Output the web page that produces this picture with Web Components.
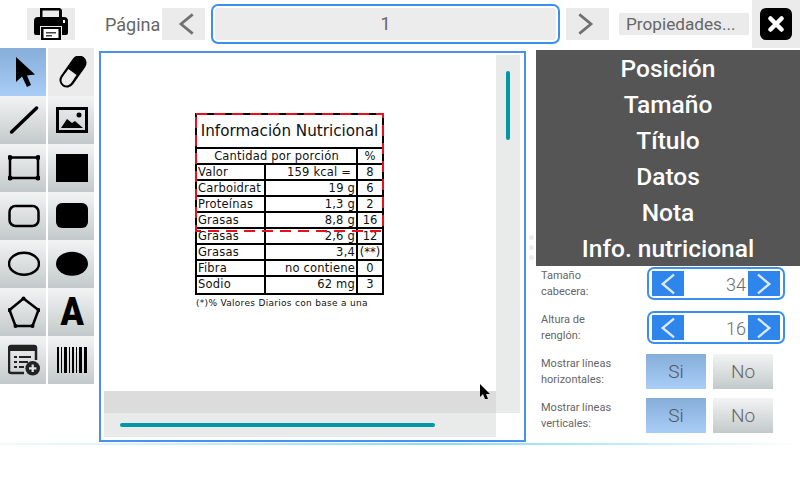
<!DOCTYPE html>
<html lang="es">
<head>
<meta charset="utf-8">
<title>Etiqueta</title>
<style>
  html, body { margin: 0; background: #fff; }
  body { width: 800px; height: 480px; overflow: hidden; font-family: Roboto, sans-serif; }
</style>
</head>
<body>
<app-shell>
  <app-topbar slot="top" page="1"></app-topbar>
  <tool-palette slot="tools"></tool-palette>
  <label-canvas slot="canvas"></label-canvas>
  <props-panel slot="props">
    <spin-field label="Tamaño cabecera:" value="34"></spin-field>
    <spin-field label="Altura de renglón:" value="16"></spin-field>
    <toggle-field label="Mostrar líneas horizontales:"></toggle-field>
    <toggle-field label="Mostrar líneas verticales:"></toggle-field>
  </props-panel>
</app-shell>

<script>
// Shared chevrons, used by the top bar and the spinners
const chevron = (dir, color, w, h, sw) => {
  const d = dir === "left" ? "M21 2 L4 16 L21 30" : "M3 2 L20 16 L3 30";
  return `<svg width="${w}" height="${h}" viewBox="0 0 24 32" fill="none" stroke="${color}" stroke-width="${sw}"><path d="${d}"/></svg>`;
};

/**
 * Page frame: top bar, then tools / canvas / properties, then the accent line.
 */
class AppShell extends HTMLElement {
  constructor() {
    super();
    this.attachShadow({ mode: "open" });
    this.shadowRoot.innerHTML = `
      <style>
        :host { display: block; width: 800px; height: 480px; }
        .main { display: flex; height: 395px; }
        .line {
          height: 2px;
          background: linear-gradient(90deg, #effbfe 0%, #dff6fc 12%, #8cdcf6 55%, #a8e6f9 70%, #ffffff 100%);
        }
      </style>
      <slot name="top"></slot>
      <div class="main">
        <slot name="tools"></slot>
        <slot name="canvas"></slot>
        <slot name="props"></slot>
      </div>
      <div class="line"></div>
    `;
  }
}

/**
 * Top bar with print button, page selector, properties and close.
 */
class AppTopbar extends HTMLElement {
  constructor() {
    super();
    this.attachShadow({ mode: "open" });
  }

  connectedCallback() {
    const page = this.getAttribute("page");
    this.shadowRoot.innerHTML = `
      <style>
        :host {
          display: flex;
          align-items: center;
          height: 48px;
          color: #666;
          font: 18px Roboto, sans-serif;
        }
        .btn {
          display: flex;
          align-items: center;
          justify-content: center;
          height: 32px;
          background: #ebebeb;
        }
        .print { width: 48px; margin-left: 27px; }
        .label { width: 57px; margin-left: 30px; white-space: nowrap; }
        .nav { width: 43px; box-sizing: border-box; }
        .prev { padding-left: 5px; }
        .next { padding-right: 5px; }
        .page {
          width: 341px;
          height: 32px;
          margin: 0 6px;
          padding: 2px;
          border: 2px solid #3a8ff0;
          border-radius: 7px;
          display: flex;
          align-items: center;
          justify-content: center;
          background: #fff;
          box-sizing: content-box;
        }
        .page span {
          flex: 1;
          height: 32px;
          line-height: 32px;
          text-align: center;
          background: #ebeceb;
          border-radius: 3px;
        }
        .props {
          margin-left: 10px;
          width: 130px;
          height: 22px;
          box-sizing: border-box;
          padding-left: 7px;
          line-height: 22px;
          font-size: 17.200px;
          background: #ebebeb;
          white-space: nowrap;
        }
        .close {
          width: 48px;
          height: 48px;
          margin-left: 3px;
          background: #ebebeb;
          display: flex;
          align-items: center;
          justify-content: center;
        }
        .close div {
          width: 32px;
          height: 32px;
          background: #000;
          border-radius: 6px;
          display: flex;
          align-items: center;
          justify-content: center;
        }
      </style>
      <div class="btn print">
        <svg width="34" height="32" viewBox="0 0 34 32">
          <path d="M6 0h20l2 2v8h-3V2.500H8.500V10H6z" fill="#000"/>
          <path d="M4 9h26a4 4 0 0 1 4 4v12a2 2 0 0 1-2 2h-4v-9H6v9H2a2 2 0 0 1-2-2V13a4 4 0 0 1 4-4z" fill="#000"/>
          <path d="M7 19h20v13H7z" fill="#000"/>
          <path d="M9.500 21h15v9h-15z" fill="#fff"/>
          <path d="M12 24h10v1.500H12zM12 27h6v1.500h-6z" fill="#444"/>
          <rect x="29" y="12" width="2" height="3" fill="#fff"/>
        </svg>
      </div>
      <span class="label">Página</span>
      <div class="btn nav prev">${chevron("left", "#707070", 17, 22, 4)}</div>
      <div class="page"><span>${page}</span></div>
      <div class="btn nav next">${chevron("right", "#707070", 17, 22, 4)}</div>
      <span class="props">Propiedades...</span>
      <div class="close">
        <div>
          <svg width="16" height="16" viewBox="0 0 16 16" stroke="#fff" stroke-width="4.500" stroke-linecap="round"><path d="M2.500 2.500 L13.500 13.500 M13.500 2.500 L2.500 13.500"/></svg>
        </div>
      </div>
    `;
  }
}

/**
 * One square button of the tool palette, the icon is slotted in.
 */
class ToolButton extends HTMLElement {
  constructor() {
    super();
    this.attachShadow({ mode: "open" });
    this.shadowRoot.innerHTML = `
      <style>
        :host {
          display: flex;
          align-items: center;
          justify-content: center;
          width: 46px;
          height: 48px;
          padding-left: 2px;
          box-sizing: border-box;
          background: linear-gradient(180deg, #f2f4f4 0%, #c3c9ca 100%);
        }
        :host([active]) { background: linear-gradient(180deg, #85aed9 0%, #a9cdf7 100%); }
        :host([flat]) { background: #ebebeb; }
      </style>
      <slot></slot>
    `;
  }
}

/**
 * Left palette, two columns of drawing tools.
 */
class ToolPalette extends HTMLElement {
  constructor() {
    super();
    this.attachShadow({ mode: "open" });
  }

  connectedCallback() {
    // icons drawn on a 32x32 box
    const svg = (body) => `<svg width="32" height="32" viewBox="0 0 32 32">${body}</svg>`;
    const icons = [
      ["active", svg(`<path d="M8 1 L8 26 L14 20.500 L19 31 L23 29 L19 19.500 L27 18.500 Z" fill="#000"/>`)],
      ["flat", svg(`<path d="M11 24 L23 7" stroke="#000" stroke-width="15" stroke-linecap="round"/><path d="M10.500 24.500 L13 21" stroke="#ebebeb" stroke-width="10" stroke-linecap="round"/><path d="M10.500 24.500 L16.500 16" stroke="#ebebeb" stroke-width="10"/>`)],
      ["", svg(`<path d="M3.600 28 L28.600 4" stroke="#000" stroke-width="3.500" stroke-linecap="round"/>`)],
      ["", svg(`<path d="M1.500 4.500h29v23h-29z" fill="none" stroke="#000" stroke-width="3"/><path d="M5 24 L11 15 L16 19 L19 17 L27 24 Z" fill="#000"/><circle cx="23" cy="11" r="2.500" fill="#000"/>`)],
      ["", svg(`<path d="M2 5.500h28v20.500H2z" fill="none" stroke="#000" stroke-width="2.500"/><g fill="#000"><circle cx="2" cy="5.500" r="2.500"/><circle cx="30" cy="5.500" r="2.500"/><circle cx="2" cy="26" r="2.500"/><circle cx="30" cy="26" r="2.500"/></g>`)],
      ["", svg(`<rect x="0" y="2" width="32" height="28" fill="#000"/>`)],
      ["", svg(`<rect x="1.500" y="6" width="29" height="20" rx="6" fill="none" stroke="#000" stroke-width="2.500"/>`)],
      ["", svg(`<rect x="0" y="3" width="32" height="25" rx="6" fill="#000"/>`)],
      ["", svg(`<ellipse cx="16" cy="15.700" rx="15" ry="11" fill="none" stroke="#000" stroke-width="2.500"/>`)],
      ["", svg(`<ellipse cx="16" cy="15.700" rx="16" ry="12" fill="#000"/>`)],
      ["", svg(`<path d="M15.500 2.500 L30.500 14 L24.500 30 L7.500 30 L1.500 14 Z" fill="none" stroke="#000" stroke-width="2.500" stroke-linejoin="round"/><g fill="#000"><circle cx="15.500" cy="2.500" r="2"/><circle cx="30.500" cy="14" r="2"/><circle cx="24.500" cy="30" r="2"/><circle cx="7.500" cy="30" r="2"/><circle cx="1.500" cy="14" r="2"/></g>`)],
      ["", `<span class="glyph">A</span>`],
      ["", svg(`<path d="M28 16V4a2 2 0 0 0-2-2H3a2 2 0 0 0-2 2v23a2 2 0 0 0 2 2h13" fill="none" stroke="#222" stroke-width="2.500"/><path d="M1 2h27v5H1z" fill="#222"/><path d="M6 12h3v2H6zM11 12h12v2H11zM6 17h3v2H6zM11 17h9v2h-9zM6 22h3v2H6zM11 22h5v2h-5z" fill="#222"/><circle cx="24.700" cy="24.300" r="7.300" fill="#222"/><path d="M21 24.300h7.400M24.700 20.600v7.400" stroke="#e0e3e3" stroke-width="2.200"/>`)],
      ["", svg(`<path d="M1 3h2v26H1zM5 3h1v26H5zM8 3h3v26H8zM13 3h1v26h-1zM16 3h2v26h-2zM20 3h1v26h-1zM23 3h3v26h-3zM28 3h3v26h-3z" fill="#000"/>`)],
    ];
    this.shadowRoot.innerHTML = `
      <style>
        :host {
          display: grid;
          grid-template-columns: 46px 46px;
          grid-auto-rows: 48px;
          column-gap: 2px;
          align-content: start;
          width: 94px;
        }
        svg { display: block; }
        .glyph {
          display: block;
          font: 900 39px/32px Roboto, sans-serif;
          color: #000;
          transform: scaleX(0.88);
        }
      </style>
      ${icons.map(([state, body]) => `<tool-button ${state}>${body}</tool-button>`).join("")}
    `;
  }
}

/**
 * Nutrition label, the table drawn on the canvas.
 */
class NutritionTable extends HTMLElement {
  constructor() {
    super();
    this.attachShadow({ mode: "open" });
  }

  connectedCallback() {
    const rows = [
      ["Valor", "159 kcal =&nbsp;", "8"],
      ["Carboidrat", "19 g", "6"],
      ["Proteínas", "1,3 g", "2"],
      ["Grasas", "8,8 g", "16"],
      ["Grasas", "2,6 g", "12"],
      ["Grasas", "3,4", "(**)"],
      ["Fibra", "no contiene", "0"],
      ["Sodio", "62 mg", "3"],
    ];
    this.shadowRoot.innerHTML = `
      <style>
        :host {
          display: block;
          width: 189px;
          font: 11.500px "DejaVu Sans", sans-serif;
          color: #111;
          box-sizing: border-box;
        }
        .grid {
          display: grid;
          grid-template-columns: 69px 92px 24px;
          grid-template-rows: 34px repeat(9, 16px);
          gap: 0;
          border: 2px solid #000;
        }
        .grid > div {
          box-sizing: border-box;
          border-bottom: 2px solid #000;
          border-right: 2px solid #000;
          line-height: 15px;
          white-space: nowrap;
          overflow: hidden;
          letter-spacing: 0.2px;
        }
        .grid > .last { border-bottom: 0; }
        .grid > .title {
          grid-column: 1 / 4;
          font-size: 15.200px;
          text-align: center;
          line-height: 32px;
          border-right: 0;
          letter-spacing: 0;
        }
        .head { grid-column: 1 / 3; text-align: center; }
        .r { text-align: right; padding-right: 1px; }
        .grid > .c { text-align: center; border-right: 0; letter-spacing: 0; }
        .l { padding-left: 1px; }
        .note { font-size: 9px; margin-top: 3px; padding-left: 1px; letter-spacing: 0.3px; white-space: nowrap; }
      </style>
      <div class="grid">
        <div class="title">Información Nutricional</div>
        <div class="head">Cantidad por porción</div>
        <div class="c">%</div>
        ${rows
          .map((row, i) => {
            const last = i === rows.length - 1 ? " last" : "";
            return `<div class="l${last}">${row[0]}</div><div class="r${last}">${row[1]}</div><div class="c${last}">${row[2]}</div>`;
          })
          .join("")}
      </div>
      <div class="note">(*)% Valores Diarios con base a una</div>
    `;
  }
}

/**
 * Canvas frame with its scrollbars, the selection box and the mouse pointer.
 */
class LabelCanvas extends HTMLElement {
  constructor() {
    super();
    this.attachShadow({ mode: "open" });
    this.shadowRoot.innerHTML = `
      <style>
        :host {
          display: block;
          position: relative;
          flex: none;
          width: 427px;
          height: 391px;
          margin: 3px 0 0 5px;
          box-sizing: border-box;
          border: 2px solid #4a90ee;
          background: #fff;
        }
        .frame {
          display: grid;
          grid-template-columns: 392px 24px;
          grid-template-rows: 336px 22px 24px;
          margin: 2px 0 0 3px;
        }
        .page { padding: 58px 0 0 91px; overflow: hidden; grid-row: 1; }
        .vbar {
          grid-column: 2;
          grid-row: 1 / 3;
          background: #e9ebea;
          padding: 16px 0 0 10px;
        }
        .vbar div { width: 4px; height: 69px; background: #0097a7; border-radius: 2px; }
        .band { grid-column: 1; grid-row: 2; background: #dcdcdc; }
        .hbar { grid-column: 1; grid-row: 3; background: #e9ebea; padding: 10px 0 0 16px; }
        .hbar div { width: 315px; height: 4px; background: #0097a7; border-radius: 2px; }
        .select { position: absolute; left: 94px; top: 60px; pointer-events: none; }
        .pointer { position: absolute; left: 379px; top: 331px; }
      </style>
      <div class="frame">
        <div class="page"><nutrition-table></nutrition-table></div>
        <div class="vbar"><div></div></div>
        <div class="band"></div>
        <div class="hbar"><div></div></div>
      </div>
      <svg class="select" width="189" height="119" viewBox="0 0 189 119">
        <rect x="1" y="1" width="187" height="117" fill="none" stroke="#e8101c" stroke-width="2" stroke-dasharray="11 7"/>
      </svg>
      <svg class="pointer" width="11" height="16" viewBox="0 0 11 16"><path d="M0 0 L0 13 L3 10 L5 15 L8 15 L6 10 L10 10 Z" fill="#000"/></svg>
    `;
  }
}

/**
 * Right side: dark menu on top, the property fields in the slot.
 */
class PropsPanel extends HTMLElement {
  constructor() {
    super();
    this.attachShadow({ mode: "open" });
    const items = ["Posición", "Tamaño", "Título", "Datos", "Nota", "Info. nutricional"];
    this.shadowRoot.innerHTML = `
      <style>
        :host {
          display: flex;
          flex: none;
          width: 274px;
        }
        .grip {
          width: 10px;
          display: flex;
          flex-direction: column;
          gap: 5px;
          padding: 187px 0 0 3px;
          box-sizing: border-box;
        }
        .grip i { width: 5px; height: 5px; border-radius: 50%; background: #ececec; }
        .col { width: 264px; padding-top: 2px; }
        .menu { background: #555; height: 216px; display: flex; flex-direction: column; }
        .menu div {
          height: 36px;
          padding-top: 1px;
          box-sizing: border-box;
          text-align: center;
          color: #fff;
          font: 500 24.500px/36px Roboto, sans-serif;
        }
        .fields { display: flex; flex-direction: column; gap: 9px; padding: 0 0 0 5px; }
      </style>
      <div class="grip"><i></i><i></i><i></i></div>
      <div class="col">
        <div class="menu">${items.map((t) => `<div>${t}</div>`).join("")}</div>
        <div class="fields"><slot></slot></div>
      </div>
    `;
  }
}

/**
 * Label and a number with left and right stepper buttons.
 */
class SpinField extends HTMLElement {
  constructor() {
    super();
    this.attachShadow({ mode: "open" });
  }

  connectedCallback() {
    this.shadowRoot.innerHTML = `
      <style>
        :host {
          display: flex;
          align-items: center;
          height: 35px;
          color: #666;
          font: 11px/16px Roboto, sans-serif;
        }
        .label { width: 106px; box-sizing: border-box; padding-right: 40px; }
        .box {
          width: 138px;
          height: 33px;
          box-sizing: border-box;
          border: 2px solid #3a8ff0;
          border-radius: 7px;
          display: flex;
          align-items: center;
          padding: 0 3px;
          color: #6c6c6c;
          font-size: 18px;
          font-weight: 300;
        }
        .step {
          flex: none;
          width: 32px;
          height: 25px;
          background: #2e86ec;
          display: flex;
          align-items: center;
          justify-content: center;
        }
        .value { flex: 1; text-align: right; padding: 3px 2px 0 0; }
      </style>
      <div class="label">${this.getAttribute("label")}</div>
      <div class="box">
        <div class="step">${chevron("left", "#dceafb", 16, 24, 3.500)}</div>
        <div class="value">${this.getAttribute("value")}</div>
        <div class="step">${chevron("right", "#dceafb", 16, 24, 3.500)}</div>
      </div>
    `;
  }
}

/**
 * Label and a Si / No pair.
 */
class ToggleField extends HTMLElement {
  constructor() {
    super();
    this.attachShadow({ mode: "open" });
  }

  connectedCallback() {
    this.shadowRoot.innerHTML = `
      <style>
        :host {
          display: flex;
          align-items: center;
          height: 35px;
          color: #666;
          font: 11px/16px Roboto, sans-serif;
        }
        .label { width: 105px; box-sizing: border-box; padding: 1px 20px 0 0; }
        .opt {
          width: 60px;
          height: 35px;
          line-height: 36px;
          text-align: center;
          font-size: 19px;
          font-weight: 300;
        }
        .yes { background: linear-gradient(180deg, #85aed9 0%, #a9cdf7 100%); color: #555; }
        .no { margin-left: 7px; background: linear-gradient(180deg, #f2f4f4 0%, #c3c9ca 100%); }
      </style>
      <div class="label">${this.getAttribute("label")}</div>
      <div class="opt yes">Si</div>
      <div class="opt no">No</div>
    `;
  }
}

customElements.define("app-shell", AppShell);
customElements.define("app-topbar", AppTopbar);
customElements.define("tool-button", ToolButton);
customElements.define("tool-palette", ToolPalette);
customElements.define("nutrition-table", NutritionTable);
customElements.define("label-canvas", LabelCanvas);
customElements.define("props-panel", PropsPanel);
customElements.define("spin-field", SpinField);
customElements.define("toggle-field", ToggleField);
</script>
</body>
</html>
